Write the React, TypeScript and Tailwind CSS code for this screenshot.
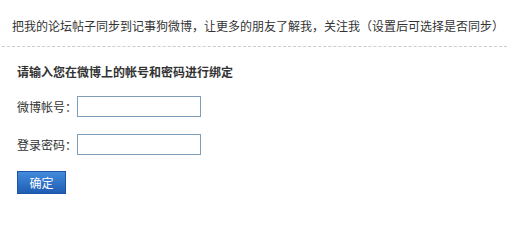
import React from "react";

export default function App() {
  return (
    <div className="w-[507px] h-[210px] bg-white text-[12px] text-[#333] [font-family:'Noto_Sans_CJK_SC','Liberation_Sans',sans-serif]">
      <div className="ml-[2px] pl-[10px] pt-[16px] pb-[10px] leading-[20px] border-b border-dashed border-[#cccccc]">
        把我的论坛帖子同步到记事狗微博，让更多的朋友了解我，关注我（设置后可选择是否同步）
      </div>
      <div className="pl-[17px]">
        <div className="mt-[15px] leading-[20px] font-bold">请输入您在微博上的帐号和密码进行绑定</div>
        <div className="mt-[14px] flex items-center h-[21px]">
          <span className="w-[60px] leading-[20px]">微博帐号：</span>
          <input type="text" className="w-[124px] h-[21px] border border-[#7f9db9] outline-none px-1" />
        </div>
        <div className="mt-[17px] flex items-center h-[21px]">
          <span className="w-[60px] leading-[20px]">登录密码：</span>
          <input type="password" className="w-[124px] h-[21px] border border-[#7f9db9] outline-none px-1" />
        </div>
        <button className="mt-[16px] w-[49px] h-[23px] border border-[#1b56a6] bg-gradient-to-b from-[#438bdc] to-[#1f5db3] text-white text-[12px] leading-[21px] flex items-center justify-center">
          确定
        </button>
      </div>
    </div>
  );
}
